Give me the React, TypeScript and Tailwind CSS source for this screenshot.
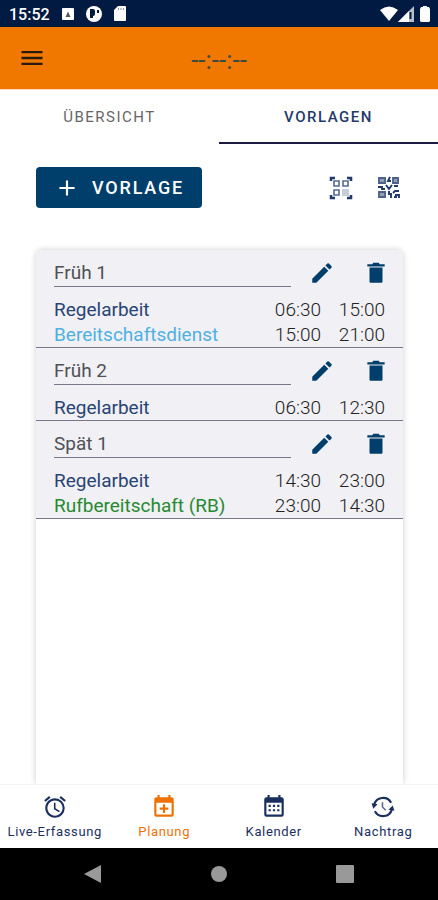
import type { ReactNode } from "react";
import { MdAdd, MdAlarm, MdEdit, MdMenu } from "react-icons/md";

type Shift = { label: string; color: string; from: string; to: string };
type Template = { name: string; shifts: Shift[] };

const templates: Template[] = [
  {
    name: "Früh 1",
    shifts: [
      { label: "Regelarbeit", color: "text-[#2a4473]", from: "06:30", to: "15:00" },
      { label: "Bereitschaftsdienst", color: "text-[#4fb0e0]", from: "15:00", to: "21:00" },
    ],
  },
  {
    name: "Früh 2",
    shifts: [{ label: "Regelarbeit", color: "text-[#2a4473]", from: "06:30", to: "12:30" }],
  },
  {
    name: "Spät 1",
    shifts: [
      { label: "Regelarbeit", color: "text-[#2a4473]", from: "14:30", to: "23:00" },
      { label: "Rufbereitschaft (RB)", color: "text-[#278a2f]", from: "23:00", to: "14:30" },
    ],
  },
];

function ScanIcon() {
  return (
    <svg viewBox="0 0 24 24" className="h-6 w-6" fill="none" stroke="currentColor">
      <path d="M2 5V2h4M18 2h4v3M22 19v3h-4M6 22H2v-3" strokeWidth="2.5" />
      <path d="M5 5h5v5H5zM14 5h5v5h-5zM5 14h5v5H5z" strokeWidth="1.6" opacity="0.75" />
      <path d="M13 13h7v7h-7z" fill="currentColor" stroke="none" opacity="0.25" />
    </svg>
  );
}

function QrIcon() {
  return (
    <svg viewBox="0 0 24 24" className="h-6 w-6" fill="none" stroke="currentColor" strokeWidth="1.9">
      <path d="M2 2h6v5H2zM16 2h5v5h-5zM2 16h6v5H2z" opacity="0.8" />
      <path d="M4 4h2v1H4zM18 4h1v1h-1zM4 18h2v1H4z" opacity="0.5" />
      <path d="M13 1l-2 4h3M1 11h4v2h3M9 9l3 4 3-4M17 10h4M12 15v3h2v4M16 17l2-2h4M17 21h2v-2h3v3" />
    </svg>
  );
}

function TrashIcon() {
  return (
    <svg viewBox="0 0 24 24" className="h-[26px] w-[26px]" fill="currentColor">
      <path d="M6 7h12v13a1 1 0 0 1-1 1H7a1 1 0 0 1-1-1zM20 4h-4.500l-1-1.500h-5L8.500 4H4v2h16z" />
    </svg>
  );
}

function CalendarPlusIcon() {
  return (
    <svg viewBox="0 0 24 24" className="h-[26px] w-[26px]" fill="currentColor">
      <path d="M19 19V8H5v11h14M16 1h2v2h1a2 2 0 0 1 2 2v14a2 2 0 0 1-2 2H5a2 2 0 0 1-2-2V5a2 2 0 0 1 2-2h1V1h2v2h8V1m-5 8.500h2v3h3v2h-3v3h-2v-3H8v-2h3v-3z" />
    </svg>
  );
}

function CalendarMonthIcon() {
  return (
    <svg viewBox="0 0 24 24" className="h-[26px] w-[26px]" fill="currentColor">
      <path d="M9 10v2H7v-2h2m4 0v2h-2v-2h2m4 0v2h-2v-2h2m2-7a2 2 0 0 1 2 2v14a2 2 0 0 1-2 2H5a2 2 0 0 1-2-2V5a2 2 0 0 1 2-2h1V1h2v2h8V1h2v2h1m0 16V8H5v11h14M9 14v2H7v-2h2m4 0v2h-2v-2h2m4 0v2h-2v-2h2z" />
    </svg>
  );
}

function HistoryIcon() {
  return (
    <svg viewBox="0 0 24 24" className="h-[26px] w-[26px]" fill="none" stroke="currentColor" strokeWidth="2">
      <path d="M3.800 10A8.500 8.500 0 0 1 19.500 8M20.200 14A8.500 8.500 0 0 1 4.500 16" />
      <path d="M11.500 7.500v4.500l3 3" strokeWidth="1.500" opacity="0.7" />
      <path d="M1.500 8.500l5.500 1-4 4zM22.500 15.500l-5.500-1 4-4z" fill="currentColor" stroke="none" />
    </svg>
  );
}

function StatusBar() {
  return (
    <div className="flex h-[27px] items-center justify-between bg-[#001a41] pr-2 pl-[9px] text-white">
      <div className="flex items-center gap-3">
        <span className="pt-0.5 text-base font-medium">15:52</span>
        <svg viewBox="0 0 12 12" className="h-3 w-3">
          <rect width="12" height="12" rx="1" fill="currentColor" />
          <path d="M3.500 9L6 3.500 8.500 9z" fill="#555" />
        </svg>
        <svg viewBox="0 0 16 16" className="h-4 w-4">
          <circle cx="8" cy="8" r="8" fill="currentColor" />
          <path d="M4 3h3a2 2 0 0 1 2 2v3a2 2 0 0 1-2 2v2H4zM11 4h2v3h-2z" fill="#001a41" />
        </svg>
        <svg viewBox="0 0 12 15" className="h-[15px] w-3">
          <path d="M4 0h7a1 1 0 0 1 1 1v13a1 1 0 0 1-1 1H1a1 1 0 0 1-1-1V4z" fill="currentColor" />
          <path d="M4.500 2v2M7 2v2M9.500 2v2" stroke="#8a93a5" />
        </svg>
      </div>
      <div className="flex items-center">
        <svg viewBox="0 0 18 15" className="h-[15px] w-[18px]">
          <path d="M0 4Q9-3 18 4L9 15z" fill="currentColor" />
        </svg>
        <svg viewBox="0 0 16 16" className="mr-1.5 h-4 w-4">
          <path d="M16 0v16H0z" fill="#b8bfcc" />
          <path d="M11 5v11H0z" fill="currentColor" />
          <path d="M12.500 6v7" stroke="#001a41" strokeWidth="2" />
        </svg>
        <svg viewBox="0 0 10 16" className="h-4 w-[10px]">
          <path d="M3 0h4v1h2l1 2v12l-1 1H1l-1-1V3l1-2h2z" fill="currentColor" />
        </svg>
      </div>
    </div>
  );
}

function TemplateRow({ template }: { template: Template }) {
  return (
    <li className="border-b border-[#77778a] bg-[#f0f0f5] px-[18px]">
      <div className="flex items-start">
        <input
          type="text"
          aria-label="Name der Vorlage"
          defaultValue={template.name}
          className="h-[37px] min-w-0 flex-1 border-b border-[#77778a] pt-2 text-[19px] text-[#505055] outline-none"
        />
        <button aria-label="Vorlage bearbeiten" className="mt-[10px] ml-[18px] text-[#003e6b]">
          <MdEdit className="h-[26px] w-[26px]" />
        </button>
        <button aria-label="Vorlage löschen" className="mt-[10px] ml-7 -mr-1 text-[#003e6b]">
          <TrashIcon />
        </button>
      </div>
      <ul className="pt-[10px] text-[19px] leading-[25px]">
        {template.shifts.map((shift) => (
          <li key={shift.label} className="flex">
            <span className={`flex-1 ${shift.color}`}>{shift.label}</span>
            <span className="w-16 text-right font-light text-[#222]">{shift.from}</span>
            <span className="w-16 text-right font-light text-[#222]">{shift.to}</span>
          </li>
        ))}
      </ul>
    </li>
  );
}

function NavItem({ label, active, children }: { label: string; active?: boolean; children: ReactNode }) {
  return (
    <a
      href="#"
      className={`flex flex-1 flex-col items-center gap-0.5 pt-[9px] text-[13px] leading-5 tracking-wider ${
        active ? "text-[#ee7203]" : "text-[#1a2f5e]"
      }`}
    >
      {children}
      <span>{label}</span>
    </a>
  );
}

export default function App() {
  return (
    <div className="flex min-h-screen flex-col bg-white font-[Roboto,sans-serif]">
      <StatusBar />

      <header className="grid h-[63px] grid-cols-[1fr_auto_1fr] items-center border-b border-[#ffd9c4] bg-[#f07800] px-[18px]">
        <button aria-label="Menü" className="justify-self-start text-[#2b1a10]">
          <MdMenu className="h-7 w-7" />
        </button>
        <span className="pt-1 text-[26px] text-[#3b4a3f]">--:--:--</span>
      </header>

      <div className="flex text-[15px] leading-[50px] tracking-widest" role="tablist">
        <button role="tab" aria-selected="false" className="flex-1 border-b-2 border-transparent pt-0.5 text-[#666]">
          ÜBERSICHT
        </button>
        <button
          role="tab"
          aria-selected="true"
          className="flex-1 border-b-2 border-[#1c1940] pt-0.5 font-medium text-[#1f3a6b]"
        >
          VORLAGEN
        </button>
      </div>

      <main className="flex flex-1 flex-col pt-[23px] pr-[35px] pl-9">
        <div className="flex items-center">
          <button className="flex h-[41px] items-center gap-3 rounded bg-[#003e6b] px-[18px] text-lg font-medium tracking-widest text-white">
            <MdAdd className="h-[26px] w-[26px]" />
            VORLAGE
          </button>
          <div className="mr-0.5 ml-auto flex gap-6 text-[#1f3a6b]">
            <button aria-label="QR-Code scannen">
              <ScanIcon />
            </button>
            <button aria-label="QR-Code anzeigen">
              <QrIcon />
            </button>
          </div>
        </div>

        <ul className="mt-[42px] flex-1 overflow-hidden rounded-t-md shadow-[0_0_6px_rgba(0,0,0,0.2)]">
          {templates.map((template) => (
            <TemplateRow key={template.name} template={template} />
          ))}
        </ul>
      </main>

      <nav className="relative flex h-16 border-t border-[#f3f3f3] bg-white">
        <NavItem label="Live-Erfassung">
          <MdAlarm className="h-[26px] w-[26px]" />
        </NavItem>
        <NavItem label="Planung" active>
          <CalendarPlusIcon />
        </NavItem>
        <NavItem label="Kalender">
          <CalendarMonthIcon />
        </NavItem>
        <NavItem label="Nachtrag">
          <HistoryIcon />
        </NavItem>
      </nav>

      <div className="flex h-[52px] items-center justify-center gap-[108px] bg-black text-[#999]">
        <button aria-label="Zurück">
          <svg viewBox="0 0 18 18" className="h-[18px] w-[18px]" fill="currentColor">
            <path d="M17 0v18L0 9z" />
          </svg>
        </button>
        <button aria-label="Startbildschirm">
          <svg viewBox="0 0 18 18" className="h-[18px] w-[18px]" fill="currentColor">
            <circle cx="9" cy="9" r="8" />
          </svg>
        </button>
        <button aria-label="Letzte Apps">
          <svg viewBox="0 0 18 18" className="h-[18px] w-[18px]" fill="currentColor">
            <rect width="18" height="18" rx="1" />
          </svg>
        </button>
      </div>
    </div>
  );
}
